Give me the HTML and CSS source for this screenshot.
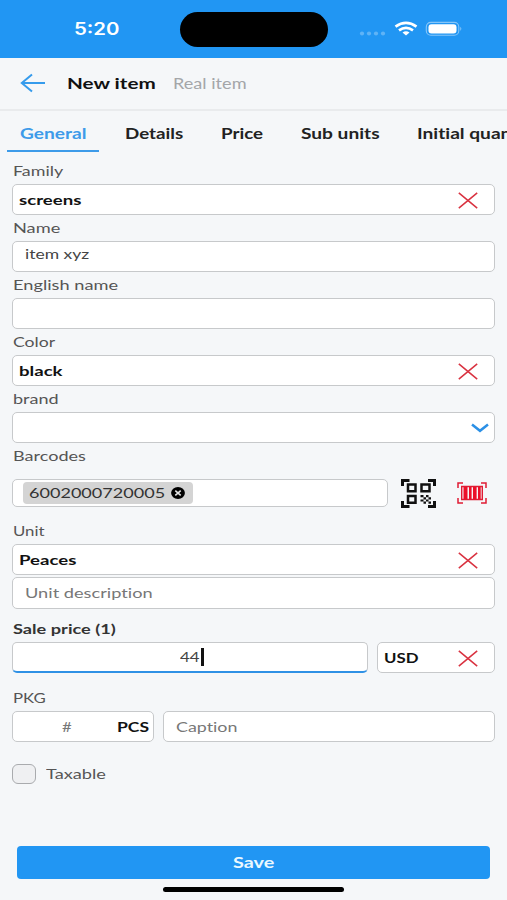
FILE: index.html
```html
<!DOCTYPE html>
<html lang="en">
<head>
<meta charset="utf-8">
<meta name="viewport" content="width=device-width, initial-scale=1">
<title>New item</title>
<link rel="stylesheet" href="styles.css">
</head>
<body>
<svg class="defs" aria-hidden="true">
  <symbol id="cross" viewBox="0 0 20 17"><path d="M.8.8 19.2 16.2M19.2.8.8 16.2" fill="none" stroke="#d93240" stroke-width="1.5"/></symbol>
</svg>
<header class="status">
  <div class="time"><span class="t t-time">5:20</span></div>
  <div class="island"></div>
  <svg class="signals" viewBox="0 0 104 20" width="104" height="20">
    <g fill="#fff" opacity=".28"><circle cx="4" cy="13.5" r="2.1"/><circle cx="11" cy="13.5" r="2.1"/><circle cx="18" cy="13.5" r="2.1"/><circle cx="25" cy="13.5" r="2.1"/></g>
    <g fill="none" stroke="#fff" stroke-width="2.7"><path d="M37.500 6.700Q48-.8 58.500 6.700"/><path d="M41 10.300Q48 5.300 55 10.300"/></g>
    <path d="M44.500 12.400Q48 10.200 51.500 12.400L48 15.400Z" fill="#fff"/>
    <rect x="68.300" y="2.400" width="32.500" height="12.800" rx="4.500" fill="none" stroke="#fff" stroke-opacity=".45" stroke-width="1.100"/>
    <rect x="70.500" y="4.200" width="28" height="9.300" rx="3" fill="#fff"/>
    <path d="M102.300 6.700q2 2.100 0 4.200z" fill="#fff" opacity=".5"/>
  </svg>
</header>
<div class="titlebar">
  <svg class="back" width="26" height="20" viewBox="0 0 26 20"><path d="M25 10H2M12 1.500 1.800 10 12 18.500" fill="none" stroke="#359bec" stroke-width="2"/></svg>
  <h1><span class="t t-title">New item</span></h1>
  <div class="kind"><span class="t t-kind">Real item</span></div>
</div>
<nav class="tabs">
  <a class="tab active"><span class="t t-general">General</span></a>
  <a class="tab"><span class="t t-details">Details</span></a>
  <a class="tab"><span class="t t-price">Price</span></a>
  <a class="tab"><span class="t t-sub">Sub units</span></a>
  <a class="tab"><span class="t t-initial">Initial quantity</span></a>
</nav>
<main>
  <label><span class="t t-family">Family</span></label>
  <div class="field strong"><span class="t t-screens">screens</span><svg class="clear"><use href="#cross"/></svg></div>
  <label><span class="t t-name">Name</span></label>
  <div class="field text raised"><span class="t t-xyz">item xyz</span></div>
  <label><span class="t t-english">English name</span></label>
  <div class="field"></div>
  <label><span class="t t-color">Color</span></label>
  <div class="field strong"><span class="t t-black">black</span><svg class="clear"><use href="#cross"/></svg></div>
  <label><span class="t t-brand">brand</span></label>
  <div class="field"><svg class="chevron" width="18" height="10" viewBox="0 0 18 10"><path d="M1 1.500 9 7.800 17 1.500" fill="none" stroke="#2b90e6" stroke-width="2.500"/></svg></div>
  <label><span class="t t-barcodes">Barcodes</span></label>
  <div class="barcodes">
    <div class="field codes"><div class="chip"><span class="t t-code">6002000720005</span><svg width="14" height="12" viewBox="0 0 14 12"><ellipse cx="7" cy="6" rx="6.900" ry="5.900"/><path d="M4.300 3.700 9.700 8.300M9.700 3.700 4.300 8.300" stroke="#e4e4e4" stroke-width="1.600"/></svg></div></div>
    <svg class="qr" width="36" height="29" viewBox="0 0 36 29">
      <g fill="none" stroke="#111">
        <path d="M1.500 7V1.500H8.500M27 1.500H33.500V7M1.500 22V27.500H8.500M27 27.500H33.500V22" stroke-width="3"/>
        <path d="M7 5.500H14.500V12.200H7ZM20.500 5.500H28.500V12.200H20.500ZM7 17H14.500V23.700H7Z" stroke-width="2.500"/>
      </g>
      <path d="M19.500 16h3v2.200h-3zM25 16h2.500v2.200H25zM22.500 18.200H25v2.200h-2.500zM27.500 18.200H30v2.200h-2.500zM19.500 20.400h3v2.200h-3zM25 20.400h2.500v2.200H25zM22.500 22.600H25v2.200h-2.500zM27.500 22.600H30v2.200h-2.500z" fill="#111"/>
    </svg>
    <svg class="bars" width="30" height="22" viewBox="0 0 30 22">
      <g fill="none" stroke="#df1c34"><path d="M1 6V1H6M24 1H29V6M1 16V21H6M24 21H29V16" stroke-width="1.500"/><path d="M4.700 4.500H25.300V17.500H4.700Z" stroke-width="1.400"/></g>
      <path d="M6.500 5h4v12h-4zM12 5h2.600v12H12zM16 5h3.600v12H16zM21 5h2.700v12H21z" fill="#ec1029"/>
    </svg>
  </div>
  <label class="unit-label"><span class="t t-unit">Unit</span></label>
  <div class="field strong"><span class="t t-peaces">Peaces</span><svg class="clear"><use href="#cross"/></svg></div>
  <div class="field text hint second"><span class="t t-desc">Unit description</span></div>
  <label class="price-label"><span class="t t-sale">Sale price (1)</span></label>
  <div class="row price-row">
    <div class="field amount"><span class="t t-amount">44</span><i class="caret"></i></div>
    <div class="field strong"><span class="t t-usd">USD</span><svg class="clear"><use href="#cross"/></svg></div>
  </div>
  <label class="pkg-label"><span class="t t-pkg">PKG</span></label>
  <div class="row pkg-row">
    <div class="field pack"><span class="hash"><span class="t t-hash">#</span></span><b><span class="t t-pcs">PCS</span></b></div>
    <div class="field text hint"><span class="t t-caption">Caption</span></div>
  </div>
  <div class="check"><span class="box"></span><span class="t t-taxable">Taxable</span></div>
</main>
<footer>
  <button><span class="t t-save">Save</span></button>
  <div class="home"></div>
</footer>
</body>
</html>
```

FILE: styles.css
```css
* { box-sizing: border-box; }
body {
  margin: 0;
  width: 507px;
  height: 900px;
  overflow: hidden;
  display: flex;
  flex-direction: column;
  background: #f5f7f9;
  font-family: Lato, "Liberation Sans", sans-serif;
  font-size: 14px;
  line-height: 18px;
  font-variant-ligatures: none;
  color: #555;
}
.defs { display: none; }
svg { flex: none; display: block; }

/* Wide lettering: every caption is stretched from its left edge. */
.t { display: inline-block; white-space: nowrap; transform-origin: 0 50%; transform: scaleX(var(--wide, 1.2)); }
.t-title, .t-barcodes, .t-code, .t-brand { --wide: 1.29; }
.t-kind, .t-xyz, .t-details, .t-price, .t-pcs { --wide: 1.25; }
.t-general, .t-sub, .t-initial, .t-family, .t-caption { --wide: 1.275; }
.t-screens, .t-black, .t-peaces { --wide: 1.33; }
.t-name, .t-english, .t-desc, .t-sale, .t-taxable { --wide: 1.3; }
.t-color { --wide: 1.26; }
.t-save { --wide: 1.32; }

.status {
  height: 58px;
  flex: none;
  background: #2196f3;
  display: grid;
  grid-template-columns: 180px 148px 1fr;
  padding-top: 12px;
}
.time { padding: 8px 0 0 74px; color: #fff; font: 600 17px/18px Inter, sans-serif; }
.island { height: 35px; border-radius: 18px; background: #000; }
.signals { margin: 8px 0 0 30px; }

.titlebar {
  height: 53px;
  flex: none;
  border-bottom: 2px solid #e9ebed;
  display: grid;
  grid-template-columns: 47px 106px 1fr;
  align-items: center;
  padding: 0 0 1px 20px;
}
h1 { margin: 0; font-size: 16px; font-weight: 700; line-height: 20px; color: #111; }
.kind { color: #a4a6a9; font-size: 14.500px; padding-top: 1px; }

.tabs {
  height: 41px;
  flex: none;
  display: grid;
  grid-template-columns: 92px 96px 80px 116px 140px;
  padding-left: 7px;
  overflow: hidden;
  color: #222;
  font-size: 15px;
  font-weight: 700;
}
.tab { padding: 13px 0 0 26px; }
.tab.active { padding-left: 13px; color: #3d9be9; border-bottom: 2px solid #3d9be9; }

main { flex: 1; padding: 6px 12px 0; }
label { display: block; height: 26px; padding: 4px 0 0 1px; }
.field {
  height: 31px;
  border: 1.500px solid #c7c9cb;
  border-radius: 5px;
  background: #fff;
  display: flex;
  align-items: center;
  padding: 0 16px 0 6px;
  color: #444;
}
.strong { color: #111; font-weight: 700; }
.text { padding-left: 12px; }
.raised { padding-bottom: 5px; }
.hint { color: #777; }
.clear { width: 20px; height: 17px; margin-left: auto; position: relative; top: 1px; }
.chevron { margin: 0 -11px 0 auto; }
.barcodes { display: grid; grid-template-columns: 376px 36px 30px; column-gap: 13px; align-items: center; height: 48px; }
.bars { margin-left: 7px; }
.codes { height: 28px; padding-left: 10px; }
.chip { width: 170px; height: 22px; border-radius: 4px; background: #d4d4d4; color: #333; display: grid; grid-template-columns: 142px 14px; align-items: center; padding-left: 6px; }
.unit-label { height: 27px; padding-top: 5px; }
.second { margin-top: 2px; height: 32px; }
.price-label { height: 33px; padding-top: 11px; font-weight: 700; color: #333; }
.row { display: grid; column-gap: 9px; }
.price-row { grid-template-columns: 356px 118px; }
.amount { border-bottom: 2px solid #2f91e5; padding-left: 167px; }
.caret { width: 2.500px; height: 18px; margin-left: 5px; background: #111; }
.pkg-label { height: 38px; padding-top: 16px; }
.pkg-row { grid-template-columns: 142px 332px; }
.pack { padding: 0 0 0 49px; }
.hash { width: 55px; color: #777; }
.pack b { color: #111; }
.check { display: flex; align-items: center; margin-top: 22px; height: 20px; }
.box { width: 24px; height: 20px; margin-right: 10px; border: 1.500px solid #a9abae; border-radius: 6px; background: #eff0f2; }

footer { height: 54px; flex: none; padding: 0 17px; }
button { display: block; width: 473px; height: 33px; border: 0; border-radius: 4px; padding: 0 0 2px 216px; text-align: left; background: #2196f3; color: #eaf8ff; font: 700 15px/18px Lato, sans-serif; }
.home { width: 181px; height: 5px; margin: 8px 0 0 146px; border-radius: 3px; background: #000; }
```
